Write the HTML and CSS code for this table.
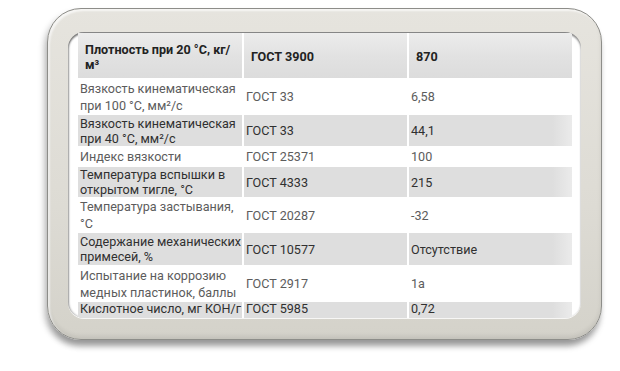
FILE: index.html
```html
<!DOCTYPE html>
<html lang="ru">
<head>
<meta charset="utf-8">
<title>Характеристики</title>
<link rel="stylesheet" href="styles.css">
</head>
<body>
<div class="frame">
  <div class="panel">
    <table class="spec">
      <colgroup><col class="c1"><col class="c2"><col class="c3"></colgroup>
      <thead>
        <tr class="head">
          <th>Плотность при 20 °С, кг/м³</th>
          <th>ГОСТ 3900</th>
          <th>870</th>
        </tr>
      </thead>
      <tbody>
        <tr class="light h37"><td>Вязкость кинематическая при 100 °С, мм²/с</td><td>ГОСТ 33</td><td>6,58</td></tr>
        <tr class="dark h31"><td>Вязкость кинематическая при 40 °С, мм²/с</td><td>ГОСТ 33</td><td>44,1</td></tr>
        <tr class="light h21"><td>Индекс вязкости</td><td>ГОСТ 25371</td><td>100</td></tr>
        <tr class="dark h30"><td>Температура вспышки в открытом тигле, °С</td><td>ГОСТ 4333</td><td>215</td></tr>
        <tr class="light h36"><td>Температура застывания, °С</td><td>ГОСТ 20287</td><td>-32</td></tr>
        <tr class="dark h32"><td>Содержание механических примесей, %</td><td>ГОСТ 10577</td><td>Отсутствие</td></tr>
        <tr class="light h37"><td>Испытание на коррозию медных пластинок, баллы</td><td>ГОСТ 2917</td><td>1а</td></tr>
        <tr class="dark last"><td>Кислотное число, мг КОН/г</td><td>ГОСТ 5985</td><td>0,72</td></tr>
      </tbody>
    </table>
  </div>
</div>
</body>
</html>
```
FILE: styles.css
```css
html, body {
  margin: 0;
  padding: 0;
  background: #ffffff;
}
body {
  width: 620px;
  height: 371px;
  overflow: hidden;
  font-family: Roboto, "Liberation Sans", Arial, sans-serif;
}
.frame {
  box-sizing: border-box;
  width: 555px;
  height: 332px;
  margin: 8px 0 0 47px;
  padding: 23px 20px 0 20px;
  border: 1px solid #8d8d89;
  border-radius: 34px;
  background: linear-gradient(180deg, #e6e4de 0%, #dddbd4 60%, #d4d2ca 100%);
  box-shadow: -3px 5px 6px rgba(0, 0, 0, 0.22), 0 8px 6px -2px rgba(0, 0, 0, 0.25), inset 0 -3px 4px rgba(0, 0, 0, 0.08), inset 2px 2px 2px rgba(255, 255, 255, 0.7);
}
.panel {
  box-sizing: border-box;
  height: 286px;
  padding: 1px 10px 0 10px;
  background: #ffffff;
  border-radius: 16px;
  overflow: hidden;
  box-shadow: inset 0 2px 2px rgba(0, 0, 0, 0.45), inset 1px 0 2px rgba(0, 0, 0, 0.3), 0 1px 0 rgba(255, 255, 255, 0.8);
}
.spec {
  width: 494px;
  table-layout: fixed;
  border-collapse: collapse;
  border-spacing: 0;
}
.c1 { width: 165px; }
.c2 { width: 165px; }
.c3 { width: 164px; }
.spec th,
.spec td {
  padding: 0 0 0 2px;
  vertical-align: middle;
  text-align: left;
  overflow: hidden;
}
.spec th + th,
.spec td + td {
  border-left: 2px solid #ffffff;
}
.head {
  height: 45px;
  background: linear-gradient(180deg, #ececec 0%, #e2e2e2 50%, #dcdcdc 100%);
}
.head th {
  padding: 2px 6px 0 7px;
  font-size: 12.6px;
  line-height: 15px;
  font-weight: 700;
  color: #222222;
}
.spec td {
  font-size: 12.6px;
  font-weight: 400;
}
.light td {
  line-height: 17px;
  color: #5c5c5c;
  background: #ffffff;
}
.dark td {
  line-height: 15px;
  color: #303030;
  background: #dedede;
}
.dark td:last-child {
  background: linear-gradient(90deg, #dedede 0%, #dedede 88%, #ebebeb 100%);
}
.h37 { height: 37px; }
.h36 { height: 36px; }
.h32 { height: 32px; }
.h31 { height: 31px; }
.h30 { height: 30px; }
.h21 { height: 21px; }
.last { height: 16px; }
.last td {
  vertical-align: top;
  line-height: 14px;
}
```
